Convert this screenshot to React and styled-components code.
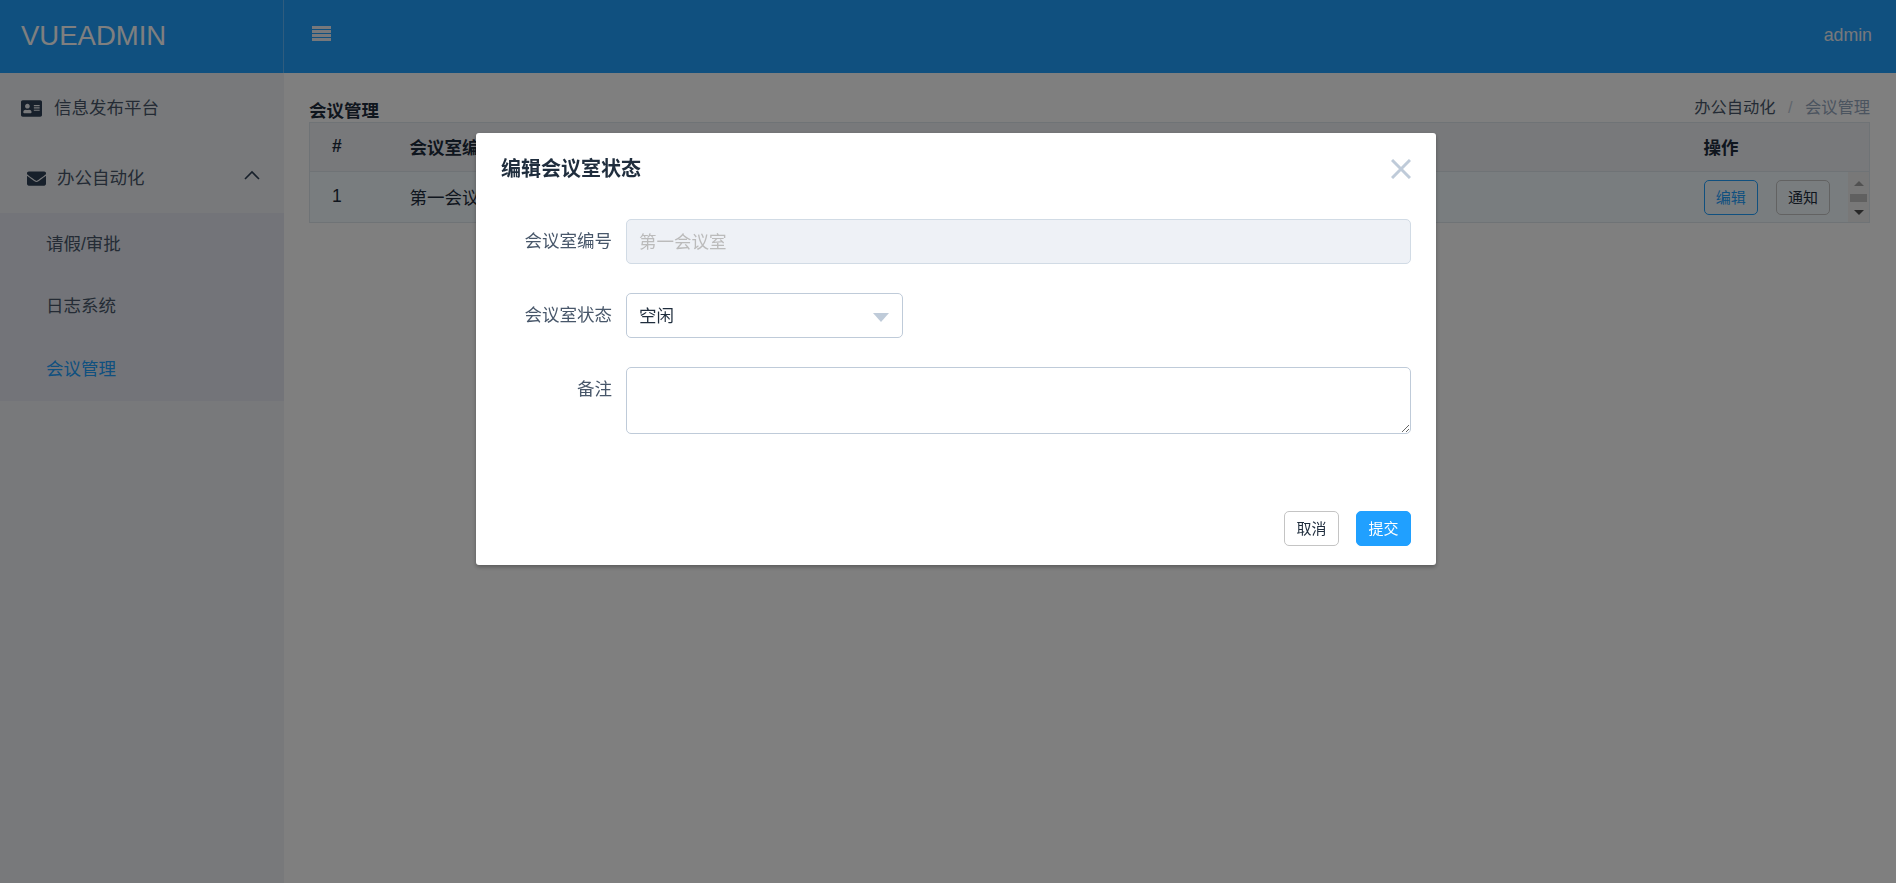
import styled, { createGlobalStyle } from "styled-components"
import { FaAddressCard, FaEnvelope } from "react-icons/fa"

const GlobalStyle = createGlobalStyle`
    * {
        box-sizing: border-box;
    }
    html, body {
        margin: 0;
        padding: 0;
        height: 100%;
        background: #fff;
        color: #1f2d3d;
        font-family: "Liberation Sans", "Noto Sans CJK SC", sans-serif;
        overflow: hidden;
    }
`

export default function App() {
    return (
        <Page>
            <GlobalStyle />
            <Header>
                <Logo>VUEADMIN</Logo>
                <Toggle viewBox="0 0 19 15">
                    <rect y="0" width="19" height="3" />
                    <rect y="4" width="19" height="3" />
                    <rect y="8" width="19" height="3" />
                    <rect y="12" width="19" height="3" />
                </Toggle>
                <User>admin</User>
            </Header>

            <Body>
                <Sidebar>
                    <MenuItem $indent={21}>
                        <IconBox><FaAddressCard size={21} /></IconBox>
                        <MenuText $gap={12}>信息发布平台</MenuText>
                    </MenuItem>
                    <MenuItem $indent={27}>
                        <IconBox><FaEnvelope size={19} /></IconBox>
                        <MenuText $gap={11}>办公自动化</MenuText>
                        <Chevron viewBox="0 0 16 10">
                            <polyline points="1,9 8,2 15,9" />
                        </Chevron>
                    </MenuItem>
                    <SubMenu>
                        <SubItem>请假/审批</SubItem>
                        <SubItem>日志系统</SubItem>
                        <SubItem $active>会议管理</SubItem>
                    </SubMenu>
                </Sidebar>

                <Main>
                    <TitleRow>
                        <PageTitle>会议管理</PageTitle>
                        <Breadcrumb>
                            <span>办公自动化</span>
                            <Slash>/</Slash>
                            <Current>会议管理</Current>
                        </Breadcrumb>
                    </TitleRow>

                    <Table>
                        <colgroup>
                            <col width="78" />
                            <col />
                            <col width="188" />
                        </colgroup>
                        <thead>
                            <tr>
                                <Th>#</Th>
                                <Th>会议室编号</Th>
                                <Th>操作</Th>
                            </tr>
                        </thead>
                        <tbody>
                            <Row>
                                <Td>1</Td>
                                <Td>第一会议室</Td>
                                <OpCell>
                                    <OpWrap>
                                        <SmallButton $primary>编辑</SmallButton>
                                        <SmallButton>通知</SmallButton>
                                        <Scroller>
                                            <Arrow $up />
                                            <Thumb />
                                            <Arrow />
                                        </Scroller>
                                    </OpWrap>
                                </OpCell>
                            </Row>
                        </tbody>
                    </Table>
                </Main>
            </Body>

            <Overlay>
                <Dialog>
                    <DialogHead>
                        <DialogTitle>编辑会议室状态</DialogTitle>
                        <Close viewBox="0 0 20 20">
                            <path d="M1 1 L19 19 M19 1 L1 19" />
                        </Close>
                    </DialogHead>

                    <FormRow>
                        <Label>会议室编号</Label>
                        <Input disabled value="第一会议室" readOnly />
                    </FormRow>
                    <FormRow>
                        <Label>会议室状态</Label>
                        <Select>
                            空闲
                            <Caret />
                        </Select>
                    </FormRow>
                    <FormRow>
                        <Label>备注</Label>
                        <Textarea />
                    </FormRow>

                    <DialogFoot>
                        <Button>取消</Button>
                        <Button $primary>提交</Button>
                    </DialogFoot>
                </Dialog>
            </Overlay>
        </Page>
    )
}

const Page = styled.div`
    height: 100vh;
    display: flex;
    flex-direction: column;
`

const Header = styled.header`
    height: 73px;
    flex: none;
    display: flex;
    align-items: center;
    background: #20a0ff;
    color: #fff;
`

const Logo = styled.div`
    width: 284px;
    height: 100%;
    padding: 0 0 2px 21px;
    display: flex;
    align-items: center;
    font-size: 27.5px;
    border-right: 1px solid rgba(238, 241, 246, 0.3);
`

const Toggle = styled.svg`
    width: 19px;
    height: 15px;
    margin: 0 0 6px 28px;
    fill: #eef1f6;
`

const User = styled.div`
    margin-left: auto;
    margin-right: 24px;
    margin-bottom: 2px;
    font-size: 17.75px;
    color: #eef1f6;
`

const Body = styled.div`
    flex: 1;
    display: flex;
    min-height: 0;
`

const Sidebar = styled.aside`
    width: 284px;
    flex: none;
    background: #f1f3f7;
`

const MenuItem = styled.div`
    height: 70px;
    display: flex;
    align-items: center;
    padding-left: ${(props) => props.$indent}px;
    color: #48576a;
    font-size: 17.5px;
`

const IconBox = styled.span`
    display: flex;
    color: #2f4056;
`

const MenuText = styled.span`
    margin-left: ${(props) => props.$gap}px;
    position: relative;
    top: -2px;
`

const Chevron = styled.svg`
    width: 16px;
    height: 10px;
    margin-left: auto;
    margin-right: 24px;
    margin-bottom: 6px;
    fill: none;
    stroke: #2f4056;
    stroke-width: 1.6;
`

const SubMenu = styled.div`
    background: #e6e9f2;
`

const SubItem = styled.div`
    height: 62.5px;
    padding: 0 0 4px 46px;
    display: flex;
    align-items: center;
    font-size: 17.5px;
    color: ${(props) => (props.$active ? "#20a0ff" : "#48576a")};
`

const Main = styled.main`
    flex: 1;
    min-width: 0;
    padding: 21px 26px 0 25px;
`

const TitleRow = styled.div`
    display: flex;
    justify-content: space-between;
    align-items: flex-end;
    height: 28px;
`

const PageTitle = styled.h3`
    margin: 0;
    font-size: 17.5px;
    font-weight: bold;
    line-height: 26px;
    position: relative;
    top: 2px;
    color: #1f2d3d;
`

const Breadcrumb = styled.div`
    font-size: 16.25px;
    line-height: 30px;
    color: #48576a;
`

const Slash = styled.span`
    margin: 0 12.5px;
    color: #bfcbd9;
`

const Current = styled.span`
    color: #97a8be;
`

const Table = styled.table`
    width: 100%;
    table-layout: fixed;
    border-collapse: collapse;
    border: 1px solid #dfe6ec;
    font-size: 17.5px;
`

const Th = styled.th`
    height: 49px;
    padding: 0 0 2px 22px;
    text-align: left;
    font-weight: bold;
    background: #f0f2f6;
    border-bottom: 1px solid #dfe6ec;
    color: #1f2d3d;
`

const Row = styled.tr`
    background: #f3fbff;
`

const Td = styled.td`
    height: 50px;
    padding: 0 0 2px 22px;
    color: #1f2d3d;
`

const OpCell = styled(Td)`
    padding: 0 0 0 22px;
`

const OpWrap = styled.div`
    height: 50px;
    display: flex;
    align-items: center;
    gap: 18px;
`

const SmallButton = styled.button`
    width: 55px;
    height: 35px;
    padding: 0 0 2px;
    background: transparent;
    border: 1px solid ${(props) => (props.$primary ? "#20a0ff" : "#c4c4c4")};
    border-radius: 5px;
    color: ${(props) => (props.$primary ? "#20a0ff" : "#1f2d3d")};
    font-family: inherit;
    font-size: 15px;
`

const Scroller = styled.div`
    width: 21px;
    height: 50px;
    margin-left: auto;
    display: flex;
    flex-direction: column;
    align-items: center;
    justify-content: space-between;
    padding: 9px 0 7px;
    background: #f1f1f1;
`

const Arrow = styled.span`
    width: 0;
    height: 0;
    border-left: 5px solid transparent;
    border-right: 5px solid transparent;
    ${(props) =>
        props.$up
            ? "border-bottom: 5px solid #a3a3a3;"
            : "border-top: 5px solid #505050;"}
`

const Thumb = styled.span`
    width: 17px;
    height: 8px;
    background: #c1c1c1;
`

const Overlay = styled.div`
    position: fixed;
    inset: 0;
    padding: 133px 0 0 476px;
    background: rgba(0, 0, 0, 0.5);
`

const Dialog = styled.div`
    width: 960px;
    height: 432px;
    padding: 0 25px;
    background: #fff;
    border-radius: 3px;
    box-shadow: 0 2px 4px rgba(0, 0, 0, 0.3);
`

const DialogHead = styled.div`
    height: 86px;
    padding-bottom: 15px;
    display: flex;
    align-items: center;
    justify-content: space-between;
`

const DialogTitle = styled.span`
    font-size: 20px;
    font-weight: bold;
    color: #1f2d3d;
    position: relative;
    top: -1px;
`

const Close = styled.svg`
    width: 20px;
    height: 20px;
    fill: none;
    stroke: #bfcbd9;
    stroke-width: 3;
`

const FormRow = styled.div`
    display: flex;
    align-items: flex-start;
    margin-bottom: 29px;
`

const Label = styled.label`
    width: 111px;
    flex: none;
    margin-right: 14px;
    line-height: 45px;
    text-align: right;
    font-size: 17.5px;
    color: #48576a;
`

const Input = styled.input`
    flex: 1;
    min-width: 0;
    height: 45px;
    padding: 0 12px 2px;
    background: #eef1f6;
    border: 1px solid #d1dbe5;
    border-radius: 5px;
    font-family: inherit;
    font-size: 17.5px;
    color: #bbb;
`

const Select = styled.div`
    position: relative;
    width: 277px;
    height: 45px;
    padding: 0 12px 2px;
    display: flex;
    align-items: center;
    border: 1px solid #bfcbd9;
    border-radius: 5px;
    font-size: 17.5px;
    color: #1f2d3d;
`

const Caret = styled.span`
    position: absolute;
    right: 13px;
    top: 19px;
    width: 0;
    height: 0;
    border-left: 8px solid transparent;
    border-right: 8px solid transparent;
    border-top: 9px solid #bfcbd9;
`

const Textarea = styled.textarea`
    flex: 1;
    min-width: 0;
    height: 67px;
    display: block;
    border: 1px solid #bfcbd9;
    border-radius: 5px;
    outline: none;
`

const DialogFoot = styled.div`
    display: flex;
    justify-content: flex-end;
    gap: 17px;
    margin-top: 77px;
`

const Button = styled.button`
    width: 55px;
    height: 35px;
    padding: 0 0 2px;
    background: ${(props) => (props.$primary ? "#20a0ff" : "#fff")};
    border: 1px solid ${(props) => (props.$primary ? "#20a0ff" : "#c4c4c4")};
    border-radius: 5px;
    color: ${(props) => (props.$primary ? "#fff" : "#1f2d3d")};
    font-family: inherit;
    font-size: 15px;
`
